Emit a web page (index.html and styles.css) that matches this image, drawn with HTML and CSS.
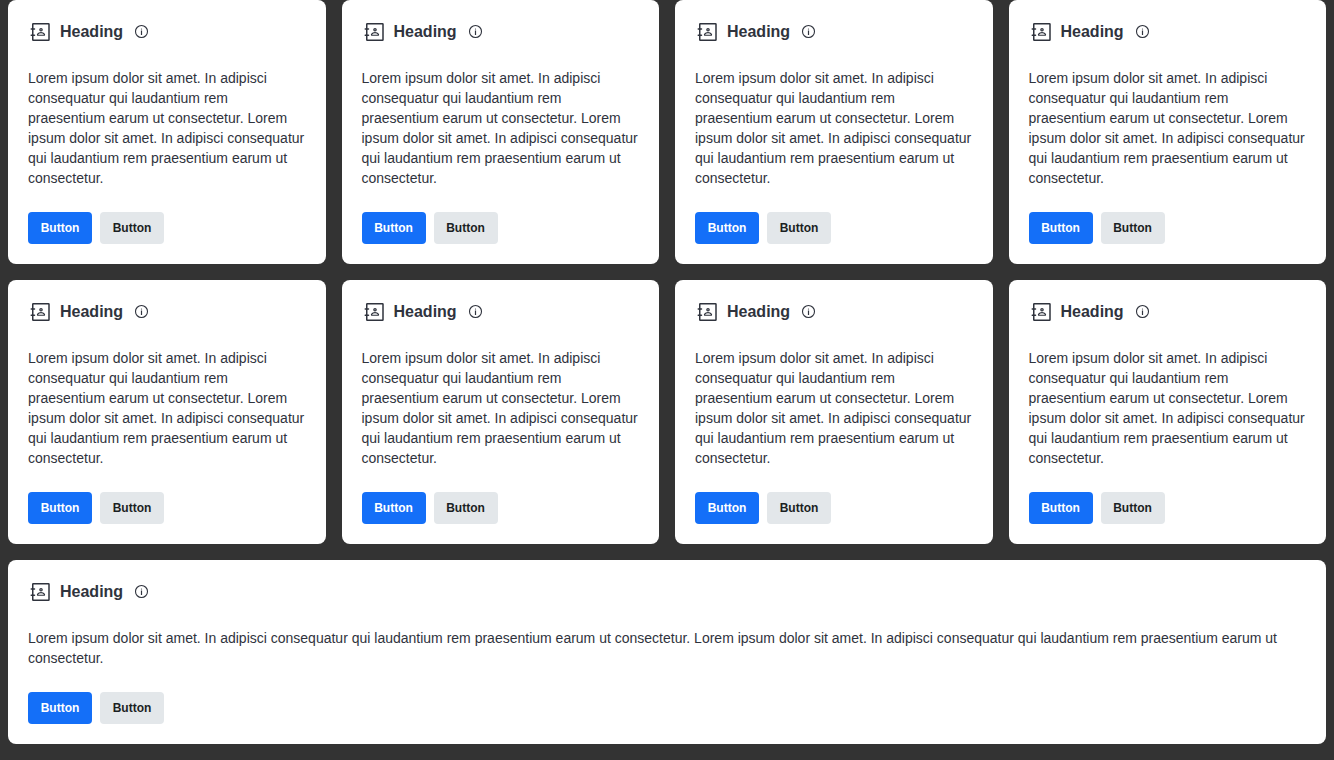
FILE: index.html
```html
<!DOCTYPE html>
<html lang="en">
<head>
<meta charset="utf-8">
<meta name="viewport" content="width=device-width, initial-scale=1">
<title>Cards</title>
<link rel="stylesheet" href="styles.css">
</head>
<body>
<svg class="sprite" aria-hidden="true">
  <symbol id="contact" viewBox="0 0 24 24">
    <g fill="none" stroke="currentColor" stroke-width="1.5" stroke-linecap="round" stroke-linejoin="round">
      <rect x="4.750" y="3.750" width="16.250" height="16.500" rx=".5"/>
      <path d="M3.250 9h3.250M3.250 15.250h3.250"/>
      <circle cx="13" cy="9.750" r="1.150" stroke-width="1.300"/>
      <path d="M10 15.250c-.6 0-.6-.7-.3-1.200.7-1 1.800-1.500 3.300-1.500s2.600.5 3.300 1.500c.3.500.3 1.200-.3 1.200z" stroke-width="1.200"/>
    </g>
  </symbol>
  <symbol id="info" viewBox="0 0 20 20">
    <circle cx="10.500" cy="9.500" r="6" fill="none" stroke="currentColor" stroke-width="1.100"/>
    <path d="M10.500 8.500v4.500" stroke="currentColor" stroke-width="1.200"/>
    <circle cx="10.500" cy="7" r=".6" fill="currentColor"/>
  </symbol>
</svg>
<main class="cards">
  <article class="card">
    <header class="card-header"><svg class="icon"><use href="#contact"/></svg><h2 class="title">Heading</h2><button class="info" type="button" aria-label="More information"><svg class="info-icon"><use href="#info"/></svg></button></header>
    <p class="text">Lorem ipsum dolor sit amet. In adipisci consequatur qui laudantium rem praesentium earum ut consectetur. Lorem ipsum dolor sit amet. In adipisci consequatur qui laudantium rem praesentium earum ut consectetur.</p>
    <footer class="actions"><button class="button primary" type="button">Button</button><button class="button" type="button">Button</button></footer>
  </article>
  <article class="card">
    <header class="card-header"><svg class="icon"><use href="#contact"/></svg><h2 class="title">Heading</h2><button class="info" type="button" aria-label="More information"><svg class="info-icon"><use href="#info"/></svg></button></header>
    <p class="text">Lorem ipsum dolor sit amet. In adipisci consequatur qui laudantium rem praesentium earum ut consectetur. Lorem ipsum dolor sit amet. In adipisci consequatur qui laudantium rem praesentium earum ut consectetur.</p>
    <footer class="actions"><button class="button primary" type="button">Button</button><button class="button" type="button">Button</button></footer>
  </article>
  <article class="card">
    <header class="card-header"><svg class="icon"><use href="#contact"/></svg><h2 class="title">Heading</h2><button class="info" type="button" aria-label="More information"><svg class="info-icon"><use href="#info"/></svg></button></header>
    <p class="text">Lorem ipsum dolor sit amet. In adipisci consequatur qui laudantium rem praesentium earum ut consectetur. Lorem ipsum dolor sit amet. In adipisci consequatur qui laudantium rem praesentium earum ut consectetur.</p>
    <footer class="actions"><button class="button primary" type="button">Button</button><button class="button" type="button">Button</button></footer>
  </article>
  <article class="card">
    <header class="card-header"><svg class="icon"><use href="#contact"/></svg><h2 class="title">Heading</h2><button class="info" type="button" aria-label="More information"><svg class="info-icon"><use href="#info"/></svg></button></header>
    <p class="text">Lorem ipsum dolor sit amet. In adipisci consequatur qui laudantium rem praesentium earum ut consectetur. Lorem ipsum dolor sit amet. In adipisci consequatur qui laudantium rem praesentium earum ut consectetur.</p>
    <footer class="actions"><button class="button primary" type="button">Button</button><button class="button" type="button">Button</button></footer>
  </article>
  <article class="card">
    <header class="card-header"><svg class="icon"><use href="#contact"/></svg><h2 class="title">Heading</h2><button class="info" type="button" aria-label="More information"><svg class="info-icon"><use href="#info"/></svg></button></header>
    <p class="text">Lorem ipsum dolor sit amet. In adipisci consequatur qui laudantium rem praesentium earum ut consectetur. Lorem ipsum dolor sit amet. In adipisci consequatur qui laudantium rem praesentium earum ut consectetur.</p>
    <footer class="actions"><button class="button primary" type="button">Button</button><button class="button" type="button">Button</button></footer>
  </article>
  <article class="card">
    <header class="card-header"><svg class="icon"><use href="#contact"/></svg><h2 class="title">Heading</h2><button class="info" type="button" aria-label="More information"><svg class="info-icon"><use href="#info"/></svg></button></header>
    <p class="text">Lorem ipsum dolor sit amet. In adipisci consequatur qui laudantium rem praesentium earum ut consectetur. Lorem ipsum dolor sit amet. In adipisci consequatur qui laudantium rem praesentium earum ut consectetur.</p>
    <footer class="actions"><button class="button primary" type="button">Button</button><button class="button" type="button">Button</button></footer>
  </article>
  <article class="card">
    <header class="card-header"><svg class="icon"><use href="#contact"/></svg><h2 class="title">Heading</h2><button class="info" type="button" aria-label="More information"><svg class="info-icon"><use href="#info"/></svg></button></header>
    <p class="text">Lorem ipsum dolor sit amet. In adipisci consequatur qui laudantium rem praesentium earum ut consectetur. Lorem ipsum dolor sit amet. In adipisci consequatur qui laudantium rem praesentium earum ut consectetur.</p>
    <footer class="actions"><button class="button primary" type="button">Button</button><button class="button" type="button">Button</button></footer>
  </article>
  <article class="card">
    <header class="card-header"><svg class="icon"><use href="#contact"/></svg><h2 class="title">Heading</h2><button class="info" type="button" aria-label="More information"><svg class="info-icon"><use href="#info"/></svg></button></header>
    <p class="text">Lorem ipsum dolor sit amet. In adipisci consequatur qui laudantium rem praesentium earum ut consectetur. Lorem ipsum dolor sit amet. In adipisci consequatur qui laudantium rem praesentium earum ut consectetur.</p>
    <footer class="actions"><button class="button primary" type="button">Button</button><button class="button" type="button">Button</button></footer>
  </article>
  <article class="card">
    <header class="card-header"><svg class="icon"><use href="#contact"/></svg><h2 class="title">Heading</h2><button class="info" type="button" aria-label="More information"><svg class="info-icon"><use href="#info"/></svg></button></header>
    <p class="text">Lorem ipsum dolor sit amet. In adipisci consequatur qui laudantium rem praesentium earum ut consectetur. Lorem ipsum dolor sit amet. In adipisci consequatur qui laudantium rem praesentium earum ut consectetur.</p>
    <footer class="actions"><button class="button primary" type="button">Button</button><button class="button" type="button">Button</button></footer>
  </article>
</main>
</body>
</html>
```

FILE: styles.css
```css
* {
  box-sizing: border-box;
}

body {
  margin: 0;
  background: #333333;
  color: #2f333d;
  font-family: "Liberation Sans", Arial, sans-serif;
  font-size: 14px;
  line-height: 20px;
}

.sprite {
  display: none;
}

.cards {
  display: flex;
  flex-wrap: wrap;
  gap: 16px;
  padding: 0 8px 16px;
}

.card {
  display: flex;
  flex: 1 1 300px;
  flex-direction: column;
  gap: 24px;
  padding: 20px;
  border-radius: 8px;
  background: #ffffff;
}

.card-header {
  display: flex;
  align-items: center;
  gap: 8px;
}

.icon {
  width: 24px;
  height: 24px;
}

.title {
  margin: 0;
  font-size: 16px;
  line-height: 24px;
}

.info {
  display: flex;
  padding: 0;
  border: 0;
  background: none;
  color: inherit;
}

.info-icon {
  width: 20px;
  height: 20px;
}

.text {
  margin: 0;
}

.actions {
  display: flex;
  gap: 8px;
}

.button {
  min-width: 64px;
  height: 32px;
  padding: 0 12px;
  border: 0;
  border-radius: 4px;
  background: #e3e7ea;
  color: #1b1f23;
  font: bold 12px/16px "Liberation Sans", Arial, sans-serif;
}

.primary {
  background: #146ff8;
  color: #ffffff;
}
```
